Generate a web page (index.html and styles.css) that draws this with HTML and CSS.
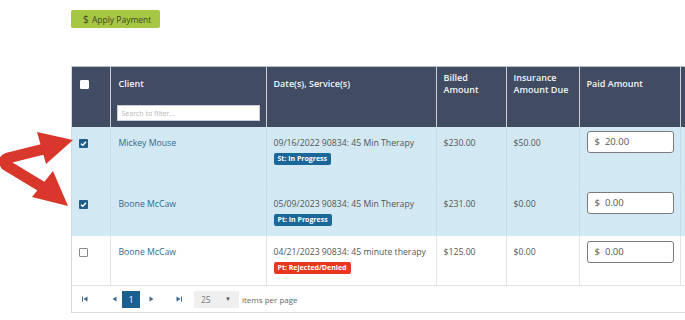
FILE: index.html
```html
<!DOCTYPE html>
<html>
<head>
  <title>Apply Payment</title>
  <link rel="stylesheet" href="styles.css">
</head>
<body>
  <div class="toolbar">
    <button class="apply-btn"><span class="dollar">$</span> Apply Payment</button>
  </div>

  <div class="grid">
    <table class="payments">
      <colgroup>
        <col class="c-check">
        <col class="c-client">
        <col class="c-date">
        <col class="c-billed">
        <col class="c-ins">
        <col class="c-paid">
        <col class="c-extra">
      </colgroup>
      <thead>
        <tr>
          <th><div class="th-title"><span class="box"></span></div></th>
          <th>
            <div class="th-title">Client</div>
            <input class="filter" type="text" placeholder="Search to filter...">
          </th>
          <th><div class="th-title">Date(s), Service(s)</div></th>
          <th><div class="th-title">Billed<br>Amount</div></th>
          <th><div class="th-title">Insurance<br>Amount Due</div></th>
          <th><div class="th-title">Paid Amount</div></th>
          <th></th>
        </tr>
      </thead>
      <tbody>
        <tr class="selected row-tall">
          <td><span class="box checked"><svg viewBox="0 0 10 10"><path d="M2.2 5.2 L4.2 7 L7.8 3" /></svg></span></td>
          <td><a class="client">Mickey Mouse</a></td>
          <td>
            <div>09/16/2022 90834: 45 Min Therapy</div>
            <div class="badge blue">St: In Progress</div>
          </td>
          <td>$230.00</td>
          <td>$50.00</td>
          <td class="paid"><div class="money"><span>$</span>20.00</div></td>
          <td></td>
        </tr>
        <tr class="selected row-mid">
          <td><span class="box checked"><svg viewBox="0 0 10 10"><path d="M2.2 5.2 L4.2 7 L7.8 3" /></svg></span></td>
          <td><a class="client">Boone McCaw</a></td>
          <td>
            <div>05/09/2023 90834: 45 Min Therapy</div>
            <div class="badge blue">Pt: In Progress</div>
          </td>
          <td>$231.00</td>
          <td>$0.00</td>
          <td class="paid"><div class="money"><span>$</span>0.00</div></td>
          <td></td>
        </tr>
        <tr class="row-low">
          <td><span class="box"></span></td>
          <td><a class="client">Boone McCaw</a></td>
          <td>
            <div>04/21/2023 90834: 45 minute therapy</div>
            <div class="badge red">Pt: Rejected/Denied</div>
          </td>
          <td>$125.00</td>
          <td>$0.00</td>
          <td class="paid"><div class="money"><span>$</span>0.00</div></td>
          <td></td>
        </tr>
      </tbody>
    </table>

    <div class="pager">
      <svg class="pg-icon first" viewBox="0 0 6 6"><rect x="0" y="0.5" width="1" height="5"/><path d="M5.5 0.5 V5.5 L1.5 3 Z"/></svg>
      <svg class="pg-icon prev" viewBox="0 0 6 6"><path d="M4.5 0.5 V5.5 L0.5 3 Z"/></svg>
      <span class="page-num">1</span>
      <svg class="pg-icon next" viewBox="0 0 6 6"><path d="M1.5 0.5 V5.5 L5.5 3 Z"/></svg>
      <svg class="pg-icon last" viewBox="0 0 6 6"><path d="M0.5 0.5 V5.5 L4.5 3 Z"/><rect x="5" y="0.5" width="1" height="5"/></svg>
      <div class="per-page"><span>25</span><span class="caret">&#9660;</span></div>
      <span class="per-label">items per page</span>
    </div>
  </div>

  <svg class="arrows" viewBox="0 0 80 215" width="80" height="215">
    <path class="shaft" d="M44 149 L8 158 Q2 160 6 165 L44 188" />
    <polygon class="head" points="37,132 73,140 46,164" />
    <polygon class="head" points="53,171 68,206 32,197" />
  </svg>
</body>
</html>
```

FILE: styles.css
```css
body {
  margin: 0;
  width: 685px;
  height: 320px;
  overflow: hidden;
  position: relative;
  font-family: "Open Sans", "Liberation Sans", sans-serif;
  font-size: 9px;
  color: #555;
  background: #fff;
}

.toolbar {
  padding: 10px 0 0 71px;
  height: 66px;
  box-sizing: border-box;
}
.apply-btn {
  display: block;
  width: 89px;
  height: 18px;
  padding: 0 0 0 12px;
  border: 0;
  border-radius: 2px;
  background: #a6c744;
  color: #3b4a22;
  font-family: inherit;
  font-size: 8.5px;
  text-align: left;
  line-height: 18px;
}
.apply-btn .dollar {
  font-size: 10px;
  margin-right: 1px;
}

.grid {
  margin-left: 71px;
  width: 720px;
  border-left: 1px solid #d8d8d8;
}

.payments {
  border-collapse: collapse;
  table-layout: fixed;
  width: 708px;
}
.c-check { width: 38px; }
.c-client { width: 156px; }
.c-date { width: 170px; }
.c-billed { width: 70px; }
.c-ins { width: 73px; }
.c-paid { width: 101px; }
.c-extra { width: 100px; }

.payments th {
  height: 60px;
  padding: 0 7px;
  background: #414c63;
  color: #f2f4f7;
  font-weight: 600;
  font-size: 9px;
  text-align: left;
  vertical-align: top;
  border-left: 1px solid #c9d0da;
  border-top: 1px solid #b8bec8;
  box-sizing: border-box;
}
.payments th:first-child {
  border-left: 0;
}
.th-title {
  height: 34px;
  display: flex;
  align-items: center;
  line-height: 12px;
}
.payments th:nth-child(2) .th-title {
  padding-left: 1px;
}
.filter {
  display: block;
  box-sizing: border-box;
  width: 143px;
  height: 16px;
  margin: 4px 0 0 -1px;
  padding: 0 4px;
  border: 1px solid #ccd;
  background: #fff;
  font-family: inherit;
  font-size: 7px;
}
.filter::placeholder {
  color: #b5b5b5;
}

.payments td {
  padding: 10px 7px 0;
  line-height: 13px;
  font-size: 8.7px;
  vertical-align: top;
  border-left: 1px solid #e3e3e3;
  border-bottom: 1px solid #e3e3e3;
  white-space: nowrap;
  overflow: hidden;
}
.payments td:first-child {
  border-left: 0;
}
.payments tr.selected td {
  background: #d2e8f3;
  border-left-color: #c4dbe8;
  border-bottom-color: #d2e8f3;
}
.payments tr.selected td:first-child {
  border-left: 0;
}
.row-tall td { height: 61px; box-sizing: border-box; }
.row-mid td { height: 48px; box-sizing: border-box; }
.row-low td { height: 50px; box-sizing: border-box; }
.payments td.paid {
  padding-top: 4px;
}
.row-low td.paid {
  padding-top: 5px;
}

.box {
  display: inline-block;
  box-sizing: border-box;
  width: 9px;
  height: 9px;
  margin-top: 2px;
  border: 1px solid #8a8a8a;
  border-radius: 1px;
  background: #fff;
  vertical-align: top;
}
th .box {
  margin: 1px 0 0 1px;
  border-color: #fff;
}
.box.checked {
  border: 0;
  background: #1e5c8a;
}
.box svg {
  display: block;
  width: 9px;
  height: 9px;
}
.box svg path {
  fill: none;
  stroke: #fff;
  stroke-width: 1.6;
}

.client {
  color: #2f6a8e;
  padding-left: 1px;
}

.badge {
  width: fit-content;
  margin-top: 3px;
  padding: 0 4px;
  height: 12px;
  line-height: 12px;
  border-radius: 2px;
  color: #fff;
  font-size: 7px;
  font-weight: 700;
}
.badge.blue { background: #1b679a; }
.badge.red { background: #e8361f; }

.money {
  box-sizing: border-box;
  width: 87px;
  height: 22px;
  line-height: 20px;
  padding-left: 7px;
  border: 1px solid #7b7b7b;
  border-radius: 3px;
  background: #fff;
  color: #555;
  font-size: 9.5px;
}
.money span {
  margin-right: 5px;
}

.pager {
  display: flex;
  align-items: center;
  height: 27px;
  box-sizing: border-box;
  border-bottom: 1px solid #dcdcdc;
  padding-left: 10px;
  color: #666;
  font-size: 8px;
}
.pg-icon {
  width: 6px;
  height: 6px;
  fill: #3d6a8c;
}
.pg-icon.prev { margin-left: 24px; }
.page-num {
  margin-left: 4px;
  width: 18px;
  height: 17px;
  line-height: 17px;
  text-align: center;
  background: #1b5f8f;
  color: #fff;
  font-size: 9px;
}
.pg-icon.next { margin-left: 8px; }
.pg-icon.last { margin-left: 22px; }
.per-page {
  display: flex;
  justify-content: space-between;
  align-items: center;
  box-sizing: border-box;
  width: 45px;
  height: 17px;
  margin-left: 12px;
  padding: 0 8px 0 7px;
  background: #efefef;
  color: #777;
  font-size: 8.5px;
}
.caret {
  font-size: 6px;
  color: #555;
}
.per-label {
  margin-left: 3px;
  color: #666;
}

.arrows {
  position: absolute;
  left: 0;
  top: 0;
}
.arrows .shaft {
  fill: none;
  stroke: #d9362c;
  stroke-width: 11;
  stroke-linejoin: round;
}
.arrows .head {
  fill: #d9362c;
}
```
